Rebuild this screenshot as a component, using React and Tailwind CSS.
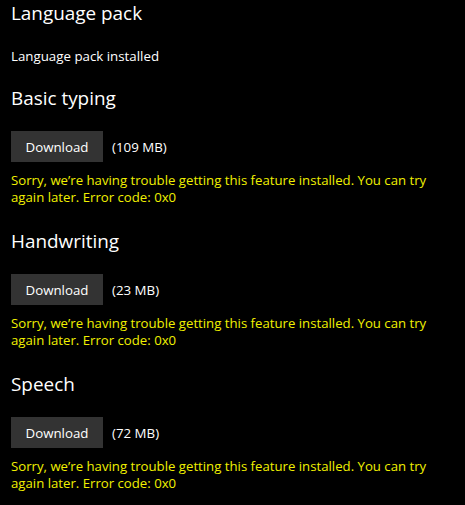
import React from "react";

const sections = [
  { title: "Basic typing", size: "(109 MB)" },
  { title: "Handwriting", size: "(23 MB)" },
  { title: "Speech", size: "(72 MB)" },
];

function Section({ title, size, first }) {
  return (
    <div className="flex flex-col">
      <h2
        className={
          (first ? "mt-[19px] " : "mt-[22px] ") +
          "text-[18.9px] leading-[26px] font-normal text-white"
        }
      >
        {title}
      </h2>
      <div className="mt-[20px] flex items-center gap-[9px]">
        <button className="h-[31px] w-[92px] bg-[#333333] text-[13.3px] leading-[20px] text-white">
          Download
        </button>
        <span className="text-[13.3px] leading-[20px] text-white">{size}</span>
      </div>
      <p className="mt-[10px] text-[13.2px] leading-[17px] text-[#f0f000]">
        Sorry, we’re having trouble getting this feature installed. You can try
        <br />
        again later. Error code: 0x0
      </p>
    </div>
  );
}

export default function App() {
  return (
    <div
      className="h-[505px] w-[465px] overflow-hidden bg-black pl-[11px]"
      style={{ fontFamily: '"Open Sans", "Noto Sans", sans-serif' }}
    >
      <h1 className="text-[18.9px] leading-[26px] font-normal text-white">Language pack</h1>
      <p className="mt-[20px] text-[13.3px] leading-[20px] text-white">Language pack installed</p>
      {sections.map((s, i) => (
        <Section key={s.title} first={i === 0} {...s} />
      ))}
    </div>
  );
}
